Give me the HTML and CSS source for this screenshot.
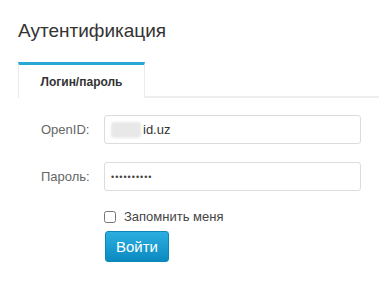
FILE: index.html
```html
<!DOCTYPE html>
<html lang="ru">
<head>
  <meta charset="UTF-8" />
  <title>Аутентификация</title>
  <link rel="stylesheet" href="styles.css">
</head>
<body>
  <div class="page">
    <h1>Аутентификация</h1>

    <div class="tabs">
      <div class="tab active">Логин/пароль</div>
      <div class="tab-rest"></div>
    </div>

    <form class="login-form">
      <div class="row">
        <label class="label" for="openid">OpenID:</label>
        <div class="field">
          <span class="blur"></span><span class="domain">id.uz</span>
        </div>
      </div>
      <div class="row">
        <label class="label" for="pass">Пароль:</label>
        <input class="field" type="password" id="pass" value="1234567890" />
      </div>
      <div class="remember">
        <input type="checkbox" id="remember" />
        <label for="remember">Запомнить меня</label>
      </div>
      <div class="actions">
        <button type="button" class="btn">Войти</button>
      </div>
    </form>
  </div>
</body>
</html>
```

FILE: styles.css
```css
body {
  margin: 0;
  background: #fff;
  font-family: 'Liberation Sans', Arial, sans-serif;
  color: #333;
}

.page {
  padding: 19px 0 0 18px;
}

h1 {
  font-size: 19px;
  font-weight: normal;
  margin: 0;
  line-height: 24px;
  color: #333;
}

.tabs {
  display: flex;
  margin-top: 19px;
}

.tab {
  width: 125px;
  height: 33px;
  border-top: 3px solid #29a8d6;
  border-left: 1px solid #ececec;
  border-right: 1px solid #ececec;
  font-size: 12px;
  font-weight: bold;
  color: #333;
  display: flex;
  align-items: center;
  justify-content: center;
}

.tab-rest {
  flex: 1;
  border-bottom: 2px solid #eeeeee;
}

.login-form {
  padding: 17px 0 0 0;
}

.row {
  display: flex;
  align-items: center;
  margin-bottom: 18px;
}

.label {
  width: 86px;
  padding-left: 23px;
  box-sizing: border-box;
  font-size: 13px;
  color: #666;
}

.field {
  width: 257px;
  height: 29px;
  box-sizing: border-box;
  border: 1px solid #dcdcdc;
  border-radius: 3px;
  padding: 0 6px;
  display: flex;
  align-items: center;
  font-family: 'Liberation Sans', Arial, sans-serif;
  font-size: 13px;
  color: #333;
  background: #fff;
}

.blur {
  display: inline-block;
  width: 30px;
  height: 16px;
  background: #e8e8e8;
  border-radius: 3px;
  filter: blur(1px);
  margin-right: 2px;
}

.domain {
  color: #333;
}

input[type="password"] {
  font-size: 9px;
  letter-spacing: 1px;
  color: #444;
}

.remember {
  display: flex;
  align-items: center;
  margin: 2px 0 0 86px;
  font-size: 13px;
  color: #444;
}

.remember input {
  width: 12px;
  height: 12px;
  margin: 0 8px 0 0;
}

.actions {
  margin: 7px 0 0 87px;
}

.btn {
  width: 64px;
  height: 31px;
  border: 1px solid #0d87b8;
  border-radius: 3px;
  background: linear-gradient(#2daee0, #0b8ac0);
  color: #fff;
  font-family: 'Liberation Sans', Arial, sans-serif;
  font-size: 15px;
  cursor: pointer;
  padding: 0;
}
```
